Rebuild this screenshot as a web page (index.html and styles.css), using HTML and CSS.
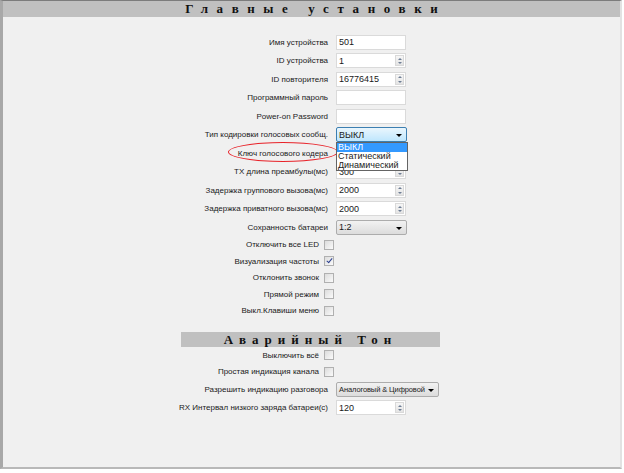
FILE: index.html
```html
<!DOCTYPE html>
<html lang="ru">
<head>
    <meta charset="UTF-8">
    <title>Главные установки</title>
    <link rel="stylesheet" href="styles.css">
</head>
<body>
    <div class="window">
        <div class="title-bar">Главные установки</div>

        <div class="form">
            <div class="row">
                <span class="label">Имя устройства</span>
                <div class="field"><span class="value">501</span></div>
            </div>
            <div class="row">
                <span class="label">ID устройства</span>
                <div class="field spin"><span class="value">1</span><span class="spin-btn"><i class="up"></i><i class="down"></i></span></div>
            </div>
            <div class="row">
                <span class="label">ID повторителя</span>
                <div class="field spin"><span class="value">16776415</span><span class="spin-btn"><i class="up"></i><i class="down"></i></span></div>
            </div>
            <div class="row">
                <span class="label">Программный пароль</span>
                <div class="field"></div>
            </div>
            <div class="row">
                <span class="label">Power-on Password</span>
                <div class="field"></div>
            </div>
            <div class="row">
                <span class="label">Тип кодировки голосовых сообщ.</span>
                <div class="combo-wrap">
                    <div class="combo active"><span class="value">ВЫКЛ</span><i class="caret"></i></div>
                    <ul class="drop-list">
                        <li class="selected">ВЫКЛ</li>
                        <li>Статический</li>
                        <li>Динамический</li>
                    </ul>
                </div>
            </div>
            <div class="row">
                <span class="label">Ключ голосового кодера</span>
                <div class="field"></div>
                <div class="mark"></div>
            </div>
            <div class="row">
                <span class="label">TX длина преамбулы(мс)</span>
                <div class="field spin"><span class="value">300</span><span class="spin-btn"><i class="up"></i><i class="down"></i></span></div>
            </div>
            <div class="row">
                <span class="label">Задержка группового вызова(мс)</span>
                <div class="field spin"><span class="value">2000</span><span class="spin-btn"><i class="up"></i><i class="down"></i></span></div>
            </div>
            <div class="row">
                <span class="label">Задержка приватного вызова(мс)</span>
                <div class="field spin"><span class="value">2000</span><span class="spin-btn"><i class="up"></i><i class="down"></i></span></div>
            </div>
            <div class="row">
                <span class="label">Сохранность батареи</span>
                <div class="combo"><span class="value">1:2</span><i class="caret"></i></div>
            </div>

            <div class="check-row"><span>Отключить все LED</span><i class="box"></i></div>
            <div class="check-row"><span>Визуализация частоты</span><i class="box checked"></i></div>
            <div class="check-row"><span>Отклонить звонок</span><i class="box"></i></div>
            <div class="check-row"><span>Прямой режим</span><i class="box"></i></div>
            <div class="check-row"><span>Выкл.Клавиши меню</span><i class="box"></i></div>
        </div>

        <div class="section-bar">Аварийный Тон</div>

        <div class="form">
            <div class="check-row"><span>Выключить всё</span><i class="box"></i></div>
            <div class="check-row"><span>Простая индикация канала</span><i class="box"></i></div>
            <div class="row">
                <span class="label">Разрешить индикацию разговора</span>
                <div class="combo wide"><span class="value">Аналоговый &amp; Цифровой</span><i class="caret"></i></div>
            </div>
            <div class="row">
                <span class="label">RX Интервал низкого заряда батареи(с)</span>
                <div class="field spin"><span class="value">120</span><span class="spin-btn"><i class="up"></i><i class="down"></i></span></div>
            </div>
        </div>
    </div>
</body>
</html>
```

FILE: styles.css
```css
body {
    margin: 0;
    padding: 0;
    background-color: #ffffff;
    font-family: 'Liberation Sans', Arial, sans-serif;
    font-size: 8px;
    color: #1a1a1a;
}

.window {
    width: 617px;
    height: 466px;
    background-color: #f0f0f0;
    border-top: 1px solid #7c7c7c;
    border-left: 3px solid #a8a8a8;
    border-right: 2px solid #e2e2e2;
    border-bottom: 2px solid #b8b8b8;
}

.title-bar {
    height: 16px;
    line-height: 16px;
    background-color: #c0c0c0;
    text-align: center;
    font-family: 'Liberation Serif', 'Times New Roman', serif;
    font-weight: bold;
    font-size: 13px;
    letter-spacing: 8.6px;
    padding-left: 8.6px;
    color: #111;
}

.form {
    display: flex;
    flex-direction: column;
    padding-top: 16px;
}

.row {
    position: relative;
    display: grid;
    grid-template-columns: 325px 80px;
    column-gap: 8px;
    align-items: center;
    height: 18.5px;
}

.label {
    text-align: right;
    white-space: nowrap;
}

.field {
    position: relative;
    display: flex;
    align-items: center;
    width: 70px;
    height: 15px;
    box-sizing: border-box;
    background-color: #fff;
    border: 1px solid #dadada;
    padding-left: 2px;
    font-size: 9px;
}

.spin-btn {
    position: absolute;
    right: 1px;
    top: 1px;
    bottom: 1px;
    width: 9px;
    display: flex;
    flex-direction: column;
    border: 1px solid #d9d9d9;
    box-sizing: border-box;
    background: linear-gradient(#f6f6f6, #e4e4e4);
}

.spin-btn i {
    flex: 1;
    display: flex;
    align-items: center;
    justify-content: center;
}

.spin-btn i::after {
    content: "";
    border-left: 2px solid transparent;
    border-right: 2px solid transparent;
}

.spin-btn .up::after {
    border-bottom: 2px solid #6d7d94;
}

.spin-btn .down::after {
    border-top: 2px solid #6d7d94;
}

.combo-wrap {
    position: relative;
}

.combo {
    position: relative;
    display: flex;
    align-items: center;
    width: 71px;
    height: 15px;
    box-sizing: border-box;
    padding-left: 2px;
    border: 1px solid #acacac;
    border-radius: 2px;
    background: linear-gradient(#f2f2f2, #dcdcdc);
    font-size: 9px;
}

.combo.active {
    border-color: #3c7fb1;
    background: linear-gradient(#eaf6fd, #bee6fd);
}

.combo.wide {
    width: 103px;
    font-size: 7.5px;
    letter-spacing: -0.1px;
    white-space: nowrap;
}

.caret {
    position: absolute;
    right: 4px;
    top: 6px;
    border-left: 3px solid transparent;
    border-right: 3px solid transparent;
    border-top: 3px solid #000;
}

.drop-list {
    position: absolute;
    left: 0;
    top: 15px;
    z-index: 5;
    width: 72px;
    margin: 0;
    padding: 0;
    list-style: none;
    background-color: #fff;
    border: 1px solid #646464;
    box-sizing: border-box;
    font-size: 9px;
}

.drop-list li {
    height: 9px;
    line-height: 9px;
    padding-left: 1px;
}

.drop-list li.selected {
    background-color: #3399ff;
    color: #fff;
}

.mark {
    position: absolute;
    left: 225px;
    top: -2px;
    width: 110px;
    height: 20px;
    border: 1.6px solid #e8232a;
    border-radius: 50%;
    box-sizing: border-box;
}

.check-row {
    display: flex;
    align-items: center;
    justify-content: flex-end;
    gap: 5px;
    width: 331px;
    height: 16.5px;
    white-space: nowrap;
}

.box {
    width: 10px;
    height: 10px;
    box-sizing: border-box;
    border: 1px solid #b0b0b0;
    background: linear-gradient(135deg, #dcdcdc, #fafafa);
    position: relative;
}

.box.checked::after {
    content: "";
    position: absolute;
    left: 3px;
    top: 0px;
    width: 2px;
    height: 5px;
    border-right: 1.5px solid #2b3f8f;
    border-bottom: 1.5px solid #2b3f8f;
    transform: rotate(40deg);
}

.section-bar {
    margin: 13px 0 0 178px;
    width: 259px;
    height: 15px;
    line-height: 15px;
    background-color: #c0c0c0;
    text-align: center;
    font-family: 'Liberation Serif', 'Times New Roman', serif;
    font-weight: bold;
    font-size: 13px;
    letter-spacing: 6px;
    color: #111;
}

.section-bar + .form {
    padding-top: 0;
}
```
